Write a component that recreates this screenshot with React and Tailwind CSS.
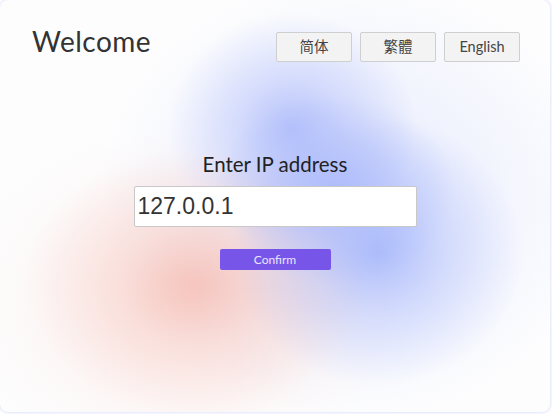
import { useState } from 'react';

const LANGS = ['简体', '繁體', 'English'];

export default function App() {
  const [ip, setIp] = useState('127.0.0.1');

  return (
    <div className="w-[552px] h-[414px] bg-white overflow-hidden">
      <div
        className="w-[550px] h-[412px] rounded-lg shadow-[0_0_3px_1px_#dfe3fb] flex flex-col px-8 pt-6 bg-[#fdfdfe] bg-[radial-gradient(ellipse_125px_115px_at_292px_128px,rgba(160,176,250,0.72),rgba(160,176,250,0.35)_45%,rgba(160,176,250,0)),radial-gradient(ellipse_120px_95px_at_335px_190px,rgba(160,176,250,0.6),rgba(160,176,250,0)),radial-gradient(ellipse_145px_135px_at_378px_252px,rgba(155,174,250,0.75),rgba(155,174,250,0.35)_45%,rgba(155,174,250,0)),radial-gradient(ellipse_170px_135px_at_195px_285px,rgba(245,182,172,0.72),rgba(245,182,172,0.3)_45%,rgba(245,182,172,0)),radial-gradient(ellipse_220px_170px_at_180px_300px,rgba(250,222,215,0.5),rgba(250,222,215,0)),radial-gradient(ellipse_250px_220px_at_350px_200px,rgba(215,222,252,0.65),rgba(215,222,252,0))]"
        style={{ fontFamily: 'Lato, "Noto Sans CJK SC", sans-serif' }}
      >
        {/* header */}
        <div className="flex items-start justify-between">
          <h1 className="text-[28px] leading-9 text-[#333] font-normal tracking-[0.5px] mt-[-1px]">Welcome</h1>
          <div className="flex gap-2 mt-2 mr-[-2px]">
            {LANGS.map((l) => (
              <button
                key={l}
                type="button"
                className="w-[76px] h-[30px] bg-[#f3f3f3] border border-[#cfcfcf] rounded-[2px] text-[14.5px] text-[#444] flex items-center justify-center"
              >
                {l}
              </button>
            ))}
          </div>
        </div>

        {/* form */}
        <div className="flex flex-col items-center mt-[88px]">
          <p className="text-[20.5px] leading-7 text-[#222]">Enter IP address</p>
          <input
            value={ip}
            onChange={(e) => setIp(e.target.value)}
            className="mt-[8px] w-[283px] h-[41px] bg-white border border-[#c8c8c8] rounded-[2px] px-[3px] text-[23px] text-[#333] outline-none"
            style={{ fontFamily: '"Liberation Sans", Arial, sans-serif' }}
          />
          <button
            type="button"
            className="mt-[22px] w-[111px] h-[21px] bg-[#7655e8] rounded-[2px] text-[12px] leading-none text-[#ece6ff] flex items-center justify-center"
          >
            Confirm
          </button>
        </div>
      </div>
    </div>
  );
}
